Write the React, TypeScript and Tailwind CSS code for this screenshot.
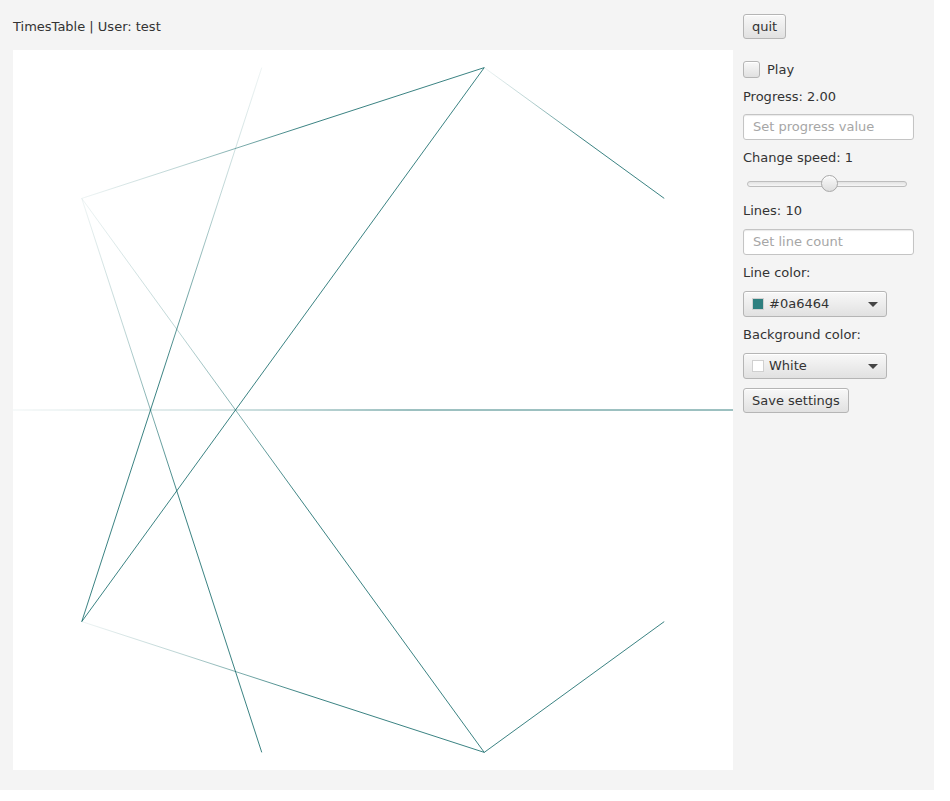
import React from "react";

const SIZE = 720;
const R = 360;
const COUNT = 10;
const FACTOR = 2;

// which end of each line fades out
const fade: Record<number, "start" | "end" | "none"> = {
  1: "end",
  2: "end",
  3: "start",
  4: "start",
  5: "start",
  6: "none",
  7: "end",
  8: "end",
  9: "none",
};

function point(k: number) {
  const a = ((k % COUNT) * 2 * Math.PI) / COUNT;
  return { x: R + R * Math.cos(a), y: R - R * Math.sin(a) };
}

function TimesCanvas() {
  const lines = [];
  for (let i = 1; i < COUNT; i++) {
    const a = point(i);
    const b = point(i * FACTOR);
    lines.push({ i, a, b, mode: fade[i] ?? "none" });
  }
  return (
    <svg width={SIZE} height={SIZE} viewBox={`0 0 ${SIZE} ${SIZE}`} className="block bg-white">
      <defs>
        {lines.map(({ i, a, b, mode }) => {
          const from = mode === "end" ? b : a;
          const to = mode === "end" ? a : b;
          const flat = mode === "none";
          return (
            <linearGradient key={i} id={`g${i}`} gradientUnits="userSpaceOnUse" x1={from.x} y1={from.y} x2={to.x} y2={to.y}>
              <stop offset="0" stopColor="#0a6464" stopOpacity={flat ? 1 : 0.08} />
              <stop offset="0.25" stopColor="#0a6464" stopOpacity={flat ? 1 : 0.35} />
              <stop offset="0.55" stopColor="#0a6464" stopOpacity={1} />
              <stop offset="1" stopColor="#0a6464" stopOpacity={1} />
            </linearGradient>
          );
        })}
      </defs>
      {lines.map(({ i, a, b }) => (
        <line key={i} x1={a.x} y1={a.y} x2={b.x} y2={b.y} stroke={`url(#g${i})`} strokeWidth={1} opacity={0.8} />
      ))}
    </svg>
  );
}

const btn =
  "h-[25px] px-[8px] rounded-[3px] border border-[#b5b5b5] bg-gradient-to-b from-[#f8f8f8] to-[#e1e1e1] shadow-[inset_0_1px_0_#ffffff] text-[13px] text-[#333] leading-none flex items-center";

function Field({ placeholder }: { placeholder: string }) {
  return (
    <div className="h-[26px] w-[171px] rounded-[3px] border border-[#c4c4c4] bg-white shadow-[inset_0_1px_1px_#eaeaea] flex items-center pl-[9px] text-[13px] text-[#a6a6a6]">
      {placeholder}
    </div>
  );
}

function Combo({ swatch, label }: { swatch: string; label: string }) {
  return (
    <div className="h-[26px] w-[144px] rounded-[3px] border border-[#b5b5b5] bg-gradient-to-b from-[#f8f8f8] to-[#e1e1e1] shadow-[inset_0_1px_0_#ffffff] flex items-center pl-[8px] pr-[8px] text-[13px] text-[#333]">
      <span className="w-[12px] h-[12px] border border-[#d0d0d0]" style={{ backgroundColor: swatch }} />
      <span className="ml-[5px] flex-1">{label}</span>
      <span className="w-0 h-0 border-l-[5px] border-r-[5px] border-t-[5px] border-l-transparent border-r-transparent border-t-[#444]" />
    </div>
  );
}

function Label({ children, className = "" }: { children: React.ReactNode; className?: string }) {
  return <div className={`h-[18px] leading-[18px] text-[13px] text-[#333] ${className}`}>{children}</div>;
}

export default function App() {
  return (
    <div className="w-[934px] h-[790px] bg-[#f4f4f4] flex gap-[10px] pl-[13px] pt-[14px] font-['DejaVu_Sans',sans-serif]">
      <div className="flex flex-col w-[720px]">
        <div className="h-[25px] flex items-center pt-[1px] text-[13px] text-[#333] mb-[11px]">TimesTable | User: test</div>
        <TimesCanvas />
      </div>
      <div className="flex flex-col w-[171px]">
        <button className={`${btn} self-start`}>quit</button>
        <div className="flex flex-col gap-[9px] mt-[21px]">
          <div className="h-[19px] flex items-center gap-[7px]">
            <span className="w-[17px] h-[17px] rounded-[3px] border border-[#b5b5b5] bg-gradient-to-b from-[#f8f8f8] to-[#e1e1e1] shadow-[inset_0_1px_0_#ffffff]" />
            <span className="text-[13px] text-[#333]">Play</span>
          </div>
          <Label>Progress: 2.00</Label>
          <div className="-mt-[1px]">
            <Field placeholder="Set progress value" />
          </div>
          <Label>Change speed: 1</Label>
          <div className="relative h-[16px] w-[171px]">
            <div className="absolute left-[4px] top-[5px] w-[160px] h-[6px] rounded-full border border-[#bdbdbd] bg-gradient-to-b from-[#e2e2e2] to-[#f6f6f6]" />
            <div className="absolute left-[78px] top-[-1px] w-[17px] h-[17px] rounded-full border border-[#a8a8a8] bg-gradient-to-b from-[#fafafa] to-[#dedede] shadow-[inset_0_1px_0_#ffffff]" />
          </div>
          <Label className="mt-[1px]">Lines: 10</Label>
          <Field placeholder="Set line count" />
          <Label>Line color:</Label>
          <Combo swatch="#2e7f7f" label="#0a6464" />
          <Label>Background color:</Label>
          <Combo swatch="#ffffff" label="White" />
          <button className={`${btn} self-start`}>Save settings</button>
        </div>
      </div>
    </div>
  );
}
